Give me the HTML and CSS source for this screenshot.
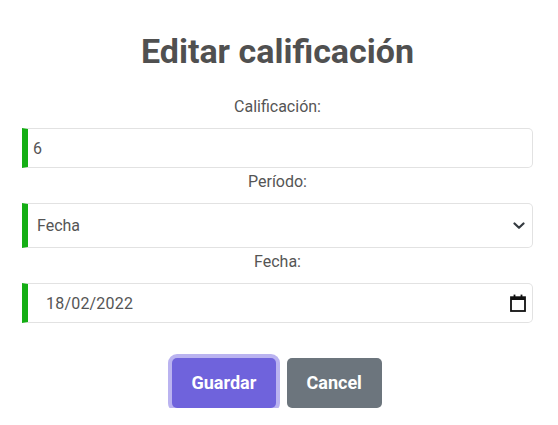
FILE: index.html
```html
<!DOCTYPE html>
<html lang="es">
<head>
<meta charset="utf-8">
<title>Editar calificación</title>
<link rel="stylesheet" href="styles.css">
</head>
<body>
<main class="page">
  <h1 class="title">Editar calificación</h1>
  <form class="form">
    <div class="field">
      <label class="label" for="nota">Calificación:</label>
      <input class="control control-text" id="nota" type="text" value="6">
    </div>
    <div class="field">
      <label class="label" for="periodo">Período:</label>
      <div class="control-wrap">
        <select class="control control-select" id="periodo">
          <option>Fecha</option>
        </select>
        <svg class="select-arrow" width="12" height="8" viewBox="0 0 12 8" aria-hidden="true">
          <path d="M1.5 1.5 L6 5.8 L10.5 1.5" fill="none" stroke="#343a40" stroke-width="2.2" stroke-linecap="round" stroke-linejoin="round"/>
        </svg>
      </div>
    </div>
    <div class="field">
      <label class="label" for="fecha">Fecha:</label>
      <div class="control-wrap">
        <input class="control control-date" id="fecha" type="text" value="18/02/2022">
        <svg class="date-icon" width="16" height="18" viewBox="0 0 16 18" aria-hidden="true">
          <rect x="1" y="3.2" width="14" height="13.8" fill="none" stroke="#111" stroke-width="1.8"/>
          <rect x="1" y="3" width="14" height="3" fill="#111"/>
          <rect x="3.6" y="0.6" width="1.8" height="3" fill="#111"/>
          <rect x="10.6" y="0.6" width="1.8" height="3" fill="#111"/>
        </svg>
      </div>
    </div>
    <div class="actions">
      <button class="btn btn-primary btn-focus" type="button">Guardar</button>
      <button class="btn btn-secondary" type="button">Cancel</button>
    </div>
  </form>
</main>
</body>
</html>
```
FILE: styles.css
```css
* { box-sizing: border-box; }

html, body {
  margin: 0;
  background: #ffffff;
}

body {
  font-family: Roboto, "Liberation Sans", Arial, sans-serif;
  color: #555555;
}

.page {
  padding: 0 25px 0 22px;
}

.title {
  margin: 31px 0 23px;
  font-size: 34px;
  line-height: 41px;
  font-weight: 700;
  text-align: center;
  color: #505050;
}

.form {
  display: flex;
  flex-direction: column;
}

.field {
  display: flex;
  flex-direction: column;
}

.field + .field {
  margin-top: 2px;
}

.label {
  display: block;
  text-align: center;
  font-size: 16px;
  line-height: 24px;
  margin-bottom: 9px;
  color: #555555;
}

.control-wrap {
  position: relative;
}

.control {
  display: block;
  width: 100%;
  height: 40px;
  margin: 0;
  font-family: Roboto, "Liberation Sans", Arial, sans-serif;
  font-size: 16px;
  color: #555555;
  background: #ffffff;
  border: 1px solid #e2e2e2;
  border-left: 6px solid #14ae14;
  border-radius: 0 5px 5px 0;
  outline: none;
}

.control-text {
  padding: 0 10px 0 5px;
}

.control-select {
  height: 45px;
  padding: 0 30px 0 9px;
  appearance: none;
  -webkit-appearance: none;
}

.select-arrow {
  position: absolute;
  right: 8px;
  top: 19px;
}

.control-date {
  padding: 0 30px 0 18px;
  letter-spacing: 0.2px;
}

.date-icon {
  position: absolute;
  right: 7px;
  top: 11px;
}

.actions {
  display: flex;
  justify-content: center;
  gap: 11px;
  margin-top: 35px;
  padding-right: 2px;
}

.btn {
  font-family: Roboto, "Liberation Sans", Arial, sans-serif;
  font-size: 18px;
  font-weight: 700;
  line-height: 26px;
  color: #ffffff;
  border: none;
  border-radius: 5px;
  padding: 12px 20px;
  cursor: pointer;
}

.btn-primary {
  background: #6f63dc;
  width: 104px;
}

.btn-focus {
  box-shadow: 0 0 0 4px #bab3f0;
}

.btn-secondary {
  background: #6c757d;
  width: 95px;
}
```
